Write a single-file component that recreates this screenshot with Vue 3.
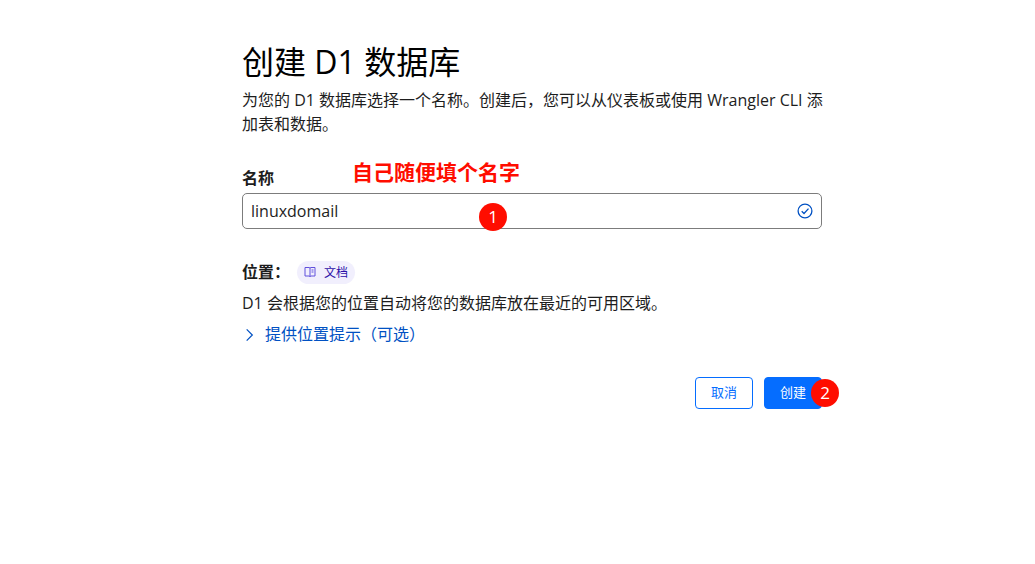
<script setup>
import { ref } from 'vue'

const name = ref('linuxdomail')
</script>

<template>
  <main class="page">
    <h1 class="title">创建 D1 数据库</h1>
    <p class="intro">为您的 D1 数据库选择一个名称。创建后，您可以从仪表板或使用 Wrangler CLI 添加表和数据。</p>

    <form class="form" @submit.prevent>
      <div class="field">
        <label class="label" for="db-name">名称</label>
        <div class="control">
          <input id="db-name" v-model="name" class="input" type="text" autocomplete="off" spellcheck="false" />
          <svg class="check" viewBox="0 0 16 16" aria-hidden="true">
            <circle cx="8" cy="8" r="6.9" />
            <path d="M4.7 8.3 7 10.5l4.5-4.9" />
          </svg>
          <span class="badge badge-one">1</span>
        </div>
        <span class="note">自己随便填个名字</span>
      </div>

      <section class="location">
        <div class="location-head">
          <h2 class="label">位置：</h2>
          <a class="docs" href="#">
            <svg class="book" viewBox="0 0 12 12" aria-hidden="true">
              <path d="M1 1.500h4L6 2l1-.5h4v8.500H7l-1 .5-1-.5H1zM6 2v8.500M7.500 4h2M7.500 6h2" />
            </svg>
            文档
          </a>
        </div>
        <p class="text">D1 会根据您的位置自动将您的数据库放在最近的可用区域。</p>
        <a class="hint" href="#">
          <svg class="chevron" viewBox="0 0 16 16" aria-hidden="true">
            <path d="m5 2.500 6 6-6 6" />
          </svg>
          提供位置提示（可选）
        </a>
      </section>

      <div class="actions">
        <button class="button" type="button">取消</button>
        <button class="button primary" type="submit">创建<span class="badge badge-two">2</span></button>
      </div>
    </form>
  </main>
</template>

<style>
body {
  margin: 0;
  background: #fff;
}
</style>

<style scoped>
.page {
  padding: 40px 213px 40px 242px;
  color: #1d1d1d;
  font-family: "Open Sans", "Noto Sans CJK SC", sans-serif;
  font-size: 16px;
  line-height: 24px;
}

.title {
  margin: 0;
  color: #000;
  font-size: 32px;
  font-weight: 400;
  line-height: 44px;
}

.intro {
  margin: 4px -8px 0 0;
}

.field {
  position: relative;
  margin-top: 30px;
}

.label {
  display: block;
  margin: 0;
  font-size: 16px;
  font-weight: 700;
  line-height: 24px;
}

.control {
  position: relative;
  margin-top: 3px;
}

.input {
  display: block;
  box-sizing: border-box;
  width: 100%;
  height: 36px;
  padding: 0 40px 0 8px;
  border: 1px solid #7c7c7c;
  border-radius: 5px;
  background: #fff;
  color: #1d1d1d;
  font: inherit;
}

.check {
  position: absolute;
  top: 10px;
  right: 9px;
  width: 16px;
  height: 16px;
  fill: none;
  stroke: #0051c3;
  stroke-width: 1.3;
}

.note {
  position: absolute;
  top: -8px;
  left: 110px;
  color: #ff0d00;
  font-size: 21px;
  font-weight: 700;
  line-height: 28px;
}

.badge {
  position: absolute;
  width: 28px;
  height: 28px;
  border-radius: 50%;
  background: #ff0d00;
  color: #fff;
  font-size: 17px;
  line-height: 28px;
  text-align: center;
}

.badge-one {
  top: 10px;
  left: 237px;
}

.badge-two {
  top: 1px;
  right: -18px;
}

.location {
  margin-top: 31px;
}

.location-head {
  display: flex;
  align-items: center;
  gap: 7px;
}

.docs {
  display: flex;
  align-items: center;
  gap: 8px;
  padding: 0 7px;
  border-radius: 12px;
  background: #f1effd;
  color: #2c0fa8;
  font-size: 12px;
  line-height: 23px;
  text-decoration: none;
}

.book {
  width: 12px;
  height: 12px;
  fill: none;
  stroke: #6050dc;
}

.text {
  margin: 7px 0 0;
}

.hint {
  display: inline-flex;
  align-items: center;
  gap: 8px;
  margin-top: 7px;
  color: #0051c3;
  text-decoration: none;
}

.chevron {
  width: 15px;
  height: 15px;
  fill: none;
  stroke: #0051c3;
  stroke-width: 1.3;
}

.actions {
  display: flex;
  justify-content: flex-end;
  gap: 11px;
  margin-top: 29px;
}

.button {
  position: relative;
  width: 58px;
  height: 32px;
  padding: 0 0 2px;
  border: 1px solid #056dff;
  border-radius: 4px;
  background: #fff;
  color: #056dff;
  font-family: inherit;
  font-size: 13px;
}

.primary {
  background: #056dff;
  color: #fff;
}
</style>
